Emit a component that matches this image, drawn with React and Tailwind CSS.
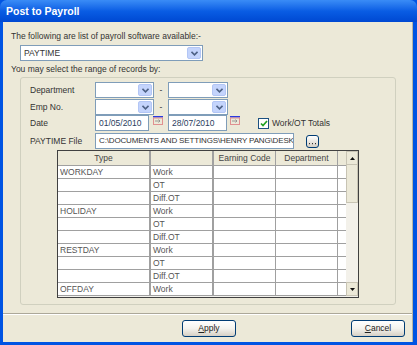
import React from 'react';

const FONT = { fontFamily: '"Liberation Sans", Arial, sans-serif' };

function Chevron() {
  return (
    <svg width="7" height="5" viewBox="0 0 7 5">
      <path d="M0.5 0.8 L3.5 3.8 L6.5 0.8" fill="none" stroke="#4D6185" strokeWidth="1.6" />
    </svg>
  );
}

function Combo({ w, text }) {
  return (
    <div className={`${w} h-[16px] bg-white border border-[#7F9DB9] flex items-stretch`}>
      <div className="flex-1 pl-[3px] text-[8.5px] leading-[14px] text-[#333] overflow-hidden whitespace-nowrap">{text}</div>
      <div className="w-[14px] m-[1px] bg-[#C4D4FC] rounded-[2px] border border-[#B3C6F5] flex items-center justify-center">
        <Chevron />
      </div>
    </div>
  );
}

function CalIcon() {
  return (
    <svg width="10" height="9" viewBox="0 0 10 9">
      <rect x="0" y="0" width="10" height="1.5" fill="#2A3BE0" />
      <rect x="0.5" y="2" width="9" height="6.5" fill="none" stroke="#E09090" strokeWidth="1" />
      <path d="M2 5 H7 M5.5 3.5 L7 5 L5.5 6.5" fill="none" stroke="#909090" strokeWidth="0.9" />
    </svg>
  );
}

function Field({ w, text, color = '#333', small = false }) {
  return (
    <div
      className={`${w} h-[16px] bg-white border border-[#7F9DB9] pl-[3px] ${small ? 'text-[8px] tracking-[-0.15px]' : 'text-[8.5px]'} leading-[14px] overflow-hidden whitespace-nowrap`}
      style={{ color }}
    >
      {text}
    </div>
  );
}

function XPButton({ w, children }) {
  return (
    <div className={`${w} h-[17px] rounded-[3px] border border-[#003C74] bg-gradient-to-b from-white via-[#F4F3EE] to-[#D6D0C5] flex items-center justify-center text-[8.5px] text-[#222]`}>
      {children}
    </div>
  );
}

const rows = [
  ['WORKDAY', 'Work'],
  ['', 'OT'],
  ['', 'Diff.OT'],
  ['HOLIDAY', 'Work'],
  ['', 'OT'],
  ['', 'Diff.OT'],
  ['RESTDAY', 'Work'],
  ['', 'OT'],
  ['', 'Diff.OT'],
  ['OFFDAY', 'Work'],
];

function Tri({ up }) {
  return (
    <svg width="5" height="3" viewBox="0 0 5 3">
      <path d={up ? 'M0 3 L2.5 0 L5 3 Z' : 'M0 0 L2.5 3 L5 0 Z'} fill="#111" />
    </svg>
  );
}

function Grid() {
  return (
    <div className="ml-[36px] mt-[1px] w-[302px] h-[148px] border border-[#404040] flex">
      <div className="w-[288px] flex flex-col bg-[#F4F3EE]">
        <div className="h-[15px] flex bg-[#ECE9D8] border-b border-[#A0A0A0] text-[8.5px] text-[#444] leading-[14px]">
          <div className="w-[93px] border-r-2 border-[#A0A0A0] text-center">Type</div>
          <div className="w-[63px] border-r-2 border-[#A0A0A0]"></div>
          <div className="w-[62px] border-r border-[#A0A0A0] text-center">Earning Code</div>
          <div className="w-[62px] border-r border-[#A0A0A0] text-center">Department</div>
          <div className="w-[8px]"></div>
        </div>
        {rows.map(([t, s], i) => (
          <div key={i} className="h-[13px] flex bg-white border-b border-[#A0A0A0] text-[8.5px] text-[#555] leading-[12px]">
            <div className="w-[93px] border-r-2 border-[#A0A0A0] pl-[2px]">{t}</div>
            <div className="w-[63px] border-r-2 border-[#A0A0A0] pl-[2px]">{s}</div>
            <div className="w-[62px] border-r border-[#A0A0A0]"></div>
            <div className="w-[62px] border-r border-[#A0A0A0]"></div>
            <div className="w-[8px]"></div>
          </div>
        ))}
      </div>
      <div className="w-[12px] flex flex-col bg-[#F3F1EA]">
        <div className="h-[14px] bg-[#ECE9D8] border border-[#C8C4B4] flex items-center justify-center">
          <Tri up />
        </div>
        <div className="h-[38px] bg-[#ECE9D8] border border-[#C8C4B4] border-t-0"></div>
        <div className="flex-1"></div>
        <div className="h-[14px] mb-[1px] bg-[#ECE9D8] border border-[#C8C4B4] flex items-center justify-center">
          <Tri />
        </div>
      </div>
    </div>
  );
}

export default function App() {
  return (
    <div className="w-[417px] h-[345px] bg-[#0054E3] flex flex-col overflow-hidden" style={FONT}>
      <div className="h-[22px] rounded-t-[7px] bg-gradient-to-b from-[#3A8CF6] via-[#0A5DE4] to-[#0048D2] pl-[6px] text-white font-bold text-[10.5px] leading-[22px]">
        Post to Payroll
      </div>
      <div className="flex-1 ml-[3px] mr-[4px] mb-[3px] bg-[#ECE9D8] border-r border-[#B8B4A4] flex flex-col text-[8.5px] text-[#333]">
        <div className="ml-[8px] mt-[8px] h-[12px] leading-[12px]">The following are list of payroll software available:-</div>
        <div className="ml-[17px] mt-[3px]">
          <Combo w="w-[183px]" text="PAYTIME" />
        </div>
        <div className="ml-[8px] mt-[2px] h-[12px] leading-[12px]">You may select the range of records by:</div>
        <div className="ml-[17px] mt-[2px] w-[376px] h-[228px] border border-[#D0D0BF] rounded-[3px] flex flex-col">
          <div className="mt-[4px] h-[16px] flex items-center">
            <div className="w-[74px] pl-[9px]">Department</div>
            <Combo w="w-[59px]" text="" />
            <div className="w-[14px] text-center">-</div>
            <Combo w="w-[60px]" text="" />
          </div>
          <div className="mt-[1px] h-[16px] flex items-center">
            <div className="w-[74px] pl-[9px]">Emp No.</div>
            <Combo w="w-[59px]" text="" />
            <div className="w-[14px] text-center">-</div>
            <Combo w="w-[60px]" text="" />
          </div>
          <div className="h-[16px] flex items-center">
            <div className="w-[74px] pl-[9px]">Date</div>
            <Field w="w-[54px]" text="01/05/2010" color="#2B3D5E" />
            <div className="w-[19px] h-[16px] pl-[4px] pt-[1px]"><CalIcon /></div>
            <Field w="w-[59px]" text="28/07/2010" color="#2B3D5E" />
            <div className="w-[31px] h-[16px] pl-[3px] pt-[1px]"><CalIcon /></div>
            <div className="w-[11px] h-[11px] border border-[#1C5180] bg-white flex items-center justify-center">
              <svg width="8" height="7" viewBox="0 0 8 7">
                <path d="M1 3.5 L3 5.5 L7 1" fill="none" stroke="#21A121" strokeWidth="1.7" />
              </svg>
            </div>
            <div className="ml-[3px]">Work/OT Totals</div>
          </div>
          <div className="mt-[2px] h-[16px] flex items-center">
            <div className="w-[74px] pl-[9px]">PAYTIME File</div>
            <Field w="w-[199px]" small text={'C:\\DOCUMENTS AND SETTINGS\\HENRY PANG\\DESK'} />
            <div className="ml-[12px] w-[13px] h-[13px] rounded-[3px] border border-[#003C74] bg-gradient-to-b from-white to-[#D6D0C5] flex items-end justify-center pb-[2px]">
              <svg width="7" height="2" viewBox="0 0 7 2">
                <rect x="0" y="0" width="1" height="1.2" fill="#333" />
                <rect x="3" y="0" width="1" height="1.2" fill="#333" />
                <rect x="6" y="0" width="1" height="1.2" fill="#333" />
              </svg>
            </div>
          </div>
          <Grid />
        </div>
        <div className="mt-[8px] h-[2px] border-t border-[#ACA899] border-b border-b-white"></div>
        <div className="mt-[5px] flex">
          <div className="ml-[179px]">
            <XPButton w="w-[54px]"><span><span className="underline">A</span>pply</span></XPButton>
          </div>
          <div className="ml-[115px]">
            <XPButton w="w-[54px]"><span><span className="underline">C</span>ancel</span></XPButton>
          </div>
        </div>
      </div>
    </div>
  );
}
